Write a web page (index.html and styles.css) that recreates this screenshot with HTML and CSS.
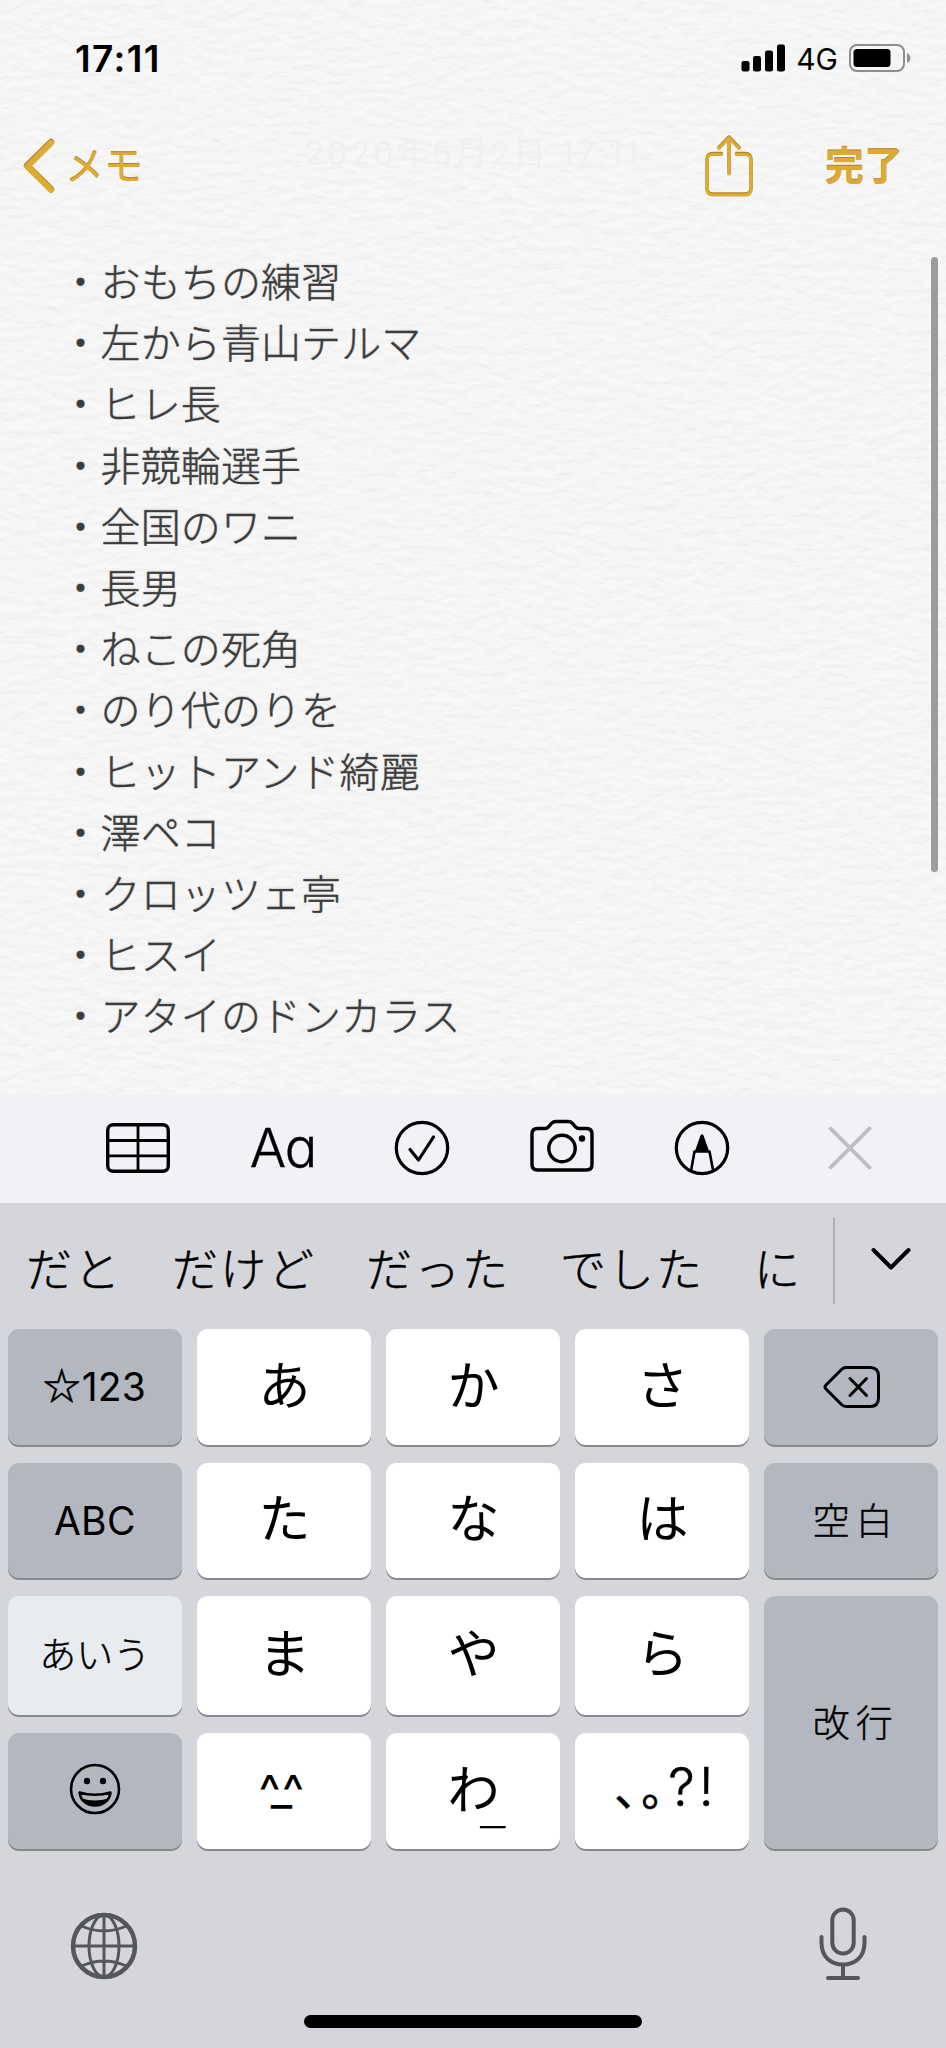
FILE: index.html
```html
<!DOCTYPE html>
<html lang="ja">
<head>
    <meta charset="UTF-8">
    <meta name="viewport" content="width=device-width, initial-scale=1.0">
    <title>メモ</title>
    <link rel="stylesheet" href="styles.css">
</head>
<body>

    <div class="note">
        <!-- Paper texture -->
        <svg class="paper" width="946" height="1094">
            <filter id="grain" x="0" y="0" width="100%" height="100%" color-interpolation-filters="sRGB">
                <feTurbulence type="fractalNoise" baseFrequency="0.06 0.12" numOctaves="3" seed="4" result="noise"/>
                <feDiffuseLighting in="noise" surfaceScale="0.9" diffuseConstant="1.15" lighting-color="#f7f7f7">
                    <feDistantLight azimuth="90" elevation="60"/>
                </feDiffuseLighting>
            </filter>
            <rect width="946" height="1094" filter="url(#grain)"/>
        </svg>

        <div class="status-bar">
            <span class="time">17:11</span>
            <div class="status-right">
                <svg width="44" height="28" viewBox="0 0 44 28">
                    <rect x="0.5" y="17" width="8" height="10.5" rx="2.2"/>
                    <rect x="12" y="12" width="8" height="15.5" rx="2.2"/>
                    <rect x="24" y="6.5" width="8" height="21" rx="2.2"/>
                    <rect x="36" y="0.5" width="8" height="27" rx="2.2"/>
                </svg>
                <span class="network">4G</span>
                <svg width="62" height="28" viewBox="0 0 62 28">
                    <rect x="1" y="1" width="54" height="26" rx="7" fill="none" stroke="#8e8e90" stroke-width="2"/>
                    <rect x="4.5" y="5" width="37" height="18" rx="3.5"/>
                    <path d="M58 9 C62.500 11 62.500 17 58 19 Z" fill="#8e8e90"/>
                </svg>
            </div>
        </div>

        <div class="nav-bar">
            <div class="back">
                <svg width="34" height="56" viewBox="0 0 34 56">
                    <path d="M28 4 L4 27.500 L28 51" class="gold-dark" stroke-width="6.500"/>
                    <path d="M28 5 L4.500 28.500 L28 52" class="gold-line" stroke-width="6"/>
                </svg>
                <span>メモ</span>
            </div>
            <div class="date">2020年5月2日 17:11</div>
            <svg class="share" width="50" height="62" viewBox="0 0 50 62">
                <g class="gold-dark" stroke-width="3.500">
                    <path d="M17.500 18.500 H9 Q3 18.500 3 24.500 V53 Q3 59 9 59 H41 Q47 59 47 53 V24.500 Q47 18.500 41 18.500 H32.500"/>
                    <path d="M25 38 V2 M15 12.500 L25 2 L35 12.500"/>
                </g>
                <g class="gold-line" stroke-width="3.200">
                    <path d="M17.500 19.500 H9 Q3 19.500 3 25.500 V54 Q3 60 9 60 H41 Q47 60 47 54 V25.500 Q47 19.500 41 19.500 H32.500"/>
                    <path d="M25 39 V3 M15 13.500 L25 3 L35 13.500"/>
                </g>
            </svg>
            <span class="done">完了</span>
        </div>

        <div class="memo">
            <p>・おもちの練習</p>
            <p>・左から青山テルマ</p>
            <p>・ヒレ長</p>
            <p>・非競輪選手</p>
            <p>・全国のワニ</p>
            <p>・長男</p>
            <p>・ねこの死角</p>
            <p>・のり代のりを</p>
            <p>・ヒットアンド綺麗</p>
            <p>・澤ペコ</p>
            <p>・クロッツェ亭</p>
            <p>・ヒスイ</p>
            <p>・アタイのドンカラス</p>
        </div>
        <div class="scrollbar"></div>
    </div>

    <div class="toolbar">
        <svg class="icon" width="64" height="50" viewBox="0 0 64 50">
            <rect x="1.700" y="1.700" width="60.600" height="46.600" rx="5.500" stroke-width="3.400"/>
            <path d="M2 17.500 H62 M2 32.800 H62 M32 2 V48" stroke-width="2.800"/>
        </svg>
        <span class="format">Aa</span>
        <svg class="icon" width="56" height="56" viewBox="0 0 56 56">
            <circle cx="28" cy="28" r="25.700" stroke-width="3.200"/>
            <path d="M16 29.500 L24.500 40 L39.500 17" stroke-width="3.200"/>
        </svg>
        <svg class="icon camera" width="66" height="54" viewBox="0 0 66 54">
            <path d="M8.500 9.500 H16 Q18 9.500 19.500 7.800 L22.500 4.400 Q24.300 2.500 27 2.500 H39 Q41.700 2.500 43.500 4.400 L46.500 7.800 Q48 9.500 50 9.500 H57.500 Q63 9.500 63 15 V45.500 Q63 51 57.500 51 H8.500 Q3 51 3 45.500 V15 Q3 9.500 8.500 9.500 Z" stroke-width="3.400"/>
            <circle cx="33" cy="29.500" r="13.200" stroke-width="3.400"/>
            <circle cx="53" cy="19.500" r="3.200" fill="#000" stroke="none"/>
        </svg>
        <svg class="icon" width="56" height="56" viewBox="0 0 56 56">
            <circle cx="28" cy="28" r="25.700" stroke-width="3.200"/>
            <path d="M17.200 50 L20.500 31.500 H35.500 L39 50" stroke-width="2.600"/>
            <path d="M21.500 31 L27 15.500 Q28 13.500 29 15.500 L34.500 31 Z" fill="#000" stroke-width="1"/>
        </svg>
        <svg class="icon close" width="44" height="44" viewBox="0 0 44 44">
            <path d="M2.500 2.500 L41.500 41.500 M41.500 2.500 L2.500 41.500" stroke-width="3.800"/>
        </svg>
    </div>

    <div class="keyboard">
        <div class="candidates">
            <span>だと</span>
            <span>だけど</span>
            <span>だった</span>
            <span>でした</span>
            <span>に</span>
            <div class="expand">
                <svg class="icon" width="40" height="24" viewBox="0 0 40 24">
                    <path d="M2.500 3 L20 20.500 L37.500 3" stroke-width="4"/>
                </svg>
            </div>
        </div>

        <div class="keys">
            <div class="key dark latin"><span class="star">☆</span>123</div>
            <div class="key">あ</div>
            <div class="key">か</div>
            <div class="key">さ</div>
            <div class="key dark backspace">
                <svg class="icon" width="58" height="44" viewBox="0 0 58 44">
                    <path d="M23 2.500 H47 Q55.500 2.500 55.500 11 V33 Q55.500 41.500 47 41.500 H23 Q20.500 41.500 18.500 39.500 L3 24 Q1 22 3 20 L18.500 4.500 Q20.500 2.500 23 2.500 Z" stroke-width="3"/>
                    <path d="M27 13.500 L43.500 30.500 M43.500 13.500 L27 30.500" stroke-width="3"/>
                </svg>
            </div>

            <div class="key dark latin">ABC</div>
            <div class="key">た</div>
            <div class="key">な</div>
            <div class="key">は</div>
            <div class="key dark label">空白</div>

            <div class="key active">あいう</div>
            <div class="key">ま</div>
            <div class="key">や</div>
            <div class="key">ら</div>
            <div class="key dark label enter">改行</div>

            <div class="key dark emoji">
                <svg class="icon" width="52" height="52" viewBox="0 0 52 52">
                    <circle cx="26" cy="26" r="24" stroke-width="2.600"/>
                    <circle cx="18" cy="18" r="3.200" fill="#000" stroke="none"/>
                    <circle cx="34" cy="18" r="3.200" fill="#000" stroke="none"/>
                    <path d="M10.500 29.500 Q26 34 41.500 29.500 C39.500 47 12.500 47 10.500 29.500 Z" stroke-width="2.400"/>
                    <path d="M12.500 35.500 Q26 39.500 39.500 35.500 C35 45.500 17 45.500 12.500 35.500 Z" fill="#000" stroke="none"/>
                </svg>
            </div>
            <div class="key face"><span>^</span><span class="mouth">_</span><span>^</span></div>
            <div class="key">わ<span class="underscore">_</span></div>
            <div class="key punct"><span class="comma">、</span><span class="period">。</span><span class="marks">?!</span></div>
        </div>

        <div class="bottom-row">
            <svg class="grey" width="68" height="68" viewBox="0 0 68 68">
                <circle cx="34" cy="34" r="31" stroke-width="4.500"/>
                <ellipse cx="34" cy="34" rx="15" ry="31" stroke-width="3"/>
                <path d="M34 3 V65 M3 34 H65 M11.500 14 Q34 24 56.500 14 M11.500 54 Q34 44 56.500 54" stroke-width="3"/>
            </svg>
            <svg class="grey" width="50" height="74" viewBox="0 0 50 74">
                <rect x="14.300" y="2.500" width="21.400" height="44" rx="10.700" stroke-width="4"/>
                <path d="M3.500 30 V36 C3.500 50 13 57.500 25 57.500 C37 57.500 46.500 50 46.500 36 V30 M25 58 V71 M10 71 H40" stroke-width="4"/>
            </svg>
        </div>
        <div class="home-indicator"></div>
    </div>

</body>
</html>
```
FILE: styles.css
```css
* {
    margin: 0;
    padding: 0;
    box-sizing: border-box;
}

body {
    width: 946px;
    height: 2048px;
    overflow: hidden;
    font-family: "Noto Sans CJK JP", sans-serif;
    background-color: #d5d6dc;
    color: #000;
}

svg {
    display: block;
    flex: none;
}

/* Note area */
.note {
    position: relative;
    height: 1094px;
    background-color: #f6f6f6;
}

.paper {
    position: absolute;
    top: 0;
    left: 0;
    opacity: 0.18; /* keep the grain subtle */
}

.status-bar,
.nav-bar,
.memo {
    position: relative;
}

.status-bar {
    display: flex;
    justify-content: space-between;
    align-items: center;
    height: 116px;
    padding: 0 35px 0 75px;
    font-family: Inter, sans-serif;
}

.time {
    font-size: 37px;
    font-weight: 600;
    letter-spacing: 1.4px;
}

.status-right {
    display: flex;
    align-items: center;
}

.network {
    margin: 2px 11px 0 11px;
    font-size: 30px;
}

.nav-bar {
    display: flex;
    align-items: center;
    height: 100px;
    padding: 0 43px 0 23px;
    color: #dbab35;
    text-shadow: 0 -1px 0 #b98025;
}

.back {
    display: flex;
    align-items: center;
    width: 281px;
    font-size: 39px;
}

.back span {
    margin: -7px 0 0 8px;
    line-height: 50px;
}

.date {
    width: 400px;
    font-family: Inter, "Noto Sans CJK JP", sans-serif;
    font-size: 33px;
    line-height: 40px;
    letter-spacing: 2.6px;
    margin-top: -26px;
    color: #f0f0f0;
    text-shadow: none;
    white-space: nowrap;
}

.done {
    margin: -7px 0 0 auto;
    font-size: 39px;
    font-weight: 700;
}

.gold-line,
.gold-dark {
    fill: none;
    stroke: #dbab35;
    stroke-linecap: round;
    stroke-linejoin: round;
}

.gold-dark {
    stroke: #b98025;
}

.memo {
    padding: 34px 0 0 60.5px;
    font-size: 40px;
    font-weight: 300;
    line-height: 61.2px;
    letter-spacing: 0.1px;
    color: #3c3c3c;
    -webkit-text-stroke: 0.4px #3c3c3c;
    text-shadow: 0 -1px 2px rgba(0, 0, 0, 0.15);
}

.scrollbar {
    position: absolute;
    top: 257px;
    right: 8px;
    width: 7px;
    height: 615px;
    border-radius: 4px;
    background-color: #9c9c9b;
}

/* Toolbar above the keyboard */
.toolbar {
    display: grid;
    grid-template-columns: 144px 146px 131px 149px 131px 166px;
    justify-items: center;
    align-items: center;
    height: 109px;
    padding: 0 0 2px 66px;
    background-color: #f1f1f6;
}

.icon {
    fill: none;
    stroke: #000;
    stroke-linecap: round;
    stroke-linejoin: round;
}

.close {
    stroke: #bcbcc1;
}

.camera {
    margin-top: -4px;
}

.format {
    font-family: Inter, sans-serif;
    font-size: 54px;
    font-weight: 300;
    font-feature-settings: "cv11";
    letter-spacing: -1px;
    -webkit-text-stroke: 0.4px #000;
}

/* Keyboard */
.keyboard {
    height: 845px;
    padding: 0 8px;
}

.candidates {
    display: flex;
    align-items: center;
    height: 126px;
    padding-left: 18px;
    font-size: 46px;
    font-weight: 300;
    line-height: 60px;
    letter-spacing: 2px;
    white-space: nowrap;
    -webkit-text-stroke: 0.5px #000;
}

.candidates span {
    flex: none;
    margin-right: 50px;
}

.expand {
    display: flex;
    flex: none;
    justify-content: center;
    align-items: center;
    width: 113px;
    height: 86px;
    margin: -10px 0 0 -19px;
    padding-bottom: 4px;
    border-left: 2px solid #adaeb3;
}

.keys {
    display: grid;
    grid-template-columns: repeat(5, 1fr);
    grid-template-rows: 116px 115px 119px 116px;
    gap: 18px 15.5px;
}

.key {
    position: relative;
    display: flex;
    justify-content: center;
    align-items: center;
    padding: 0 0 9px 1px;
    border-radius: 11px;
    background-color: #fff;
    box-shadow: 0 2px 0 #88898d;
    font-size: 52px;
    line-height: 60px;
}

.dark {
    padding: 0;
    background-color: #b3b7c0;
}

.active {
    padding: 0 0 5px;
    background-color: #e8ebf0;
    font-size: 37px;
    font-weight: 300;
    -webkit-text-stroke: 0.4px #000;
}

.latin {
    font-family: Inter, sans-serif;
    font-size: 39px;
    letter-spacing: 0.3px;
}

.star {
    margin: -6px 1px 0 0;
    font-family: "Noto Sans CJK JP", sans-serif;
    font-size: 37px;
    -webkit-text-stroke: 0.7px #000;
}

.label {
    padding: 0 0 4px 9px;
    font-size: 37px;
    font-weight: 300;
    letter-spacing: 6px;
    -webkit-text-stroke: 0.4px #000;
}

.enter {
    grid-row: span 2;
}

.backspace {
    padding-left: 1px;
}

.emoji {
    padding-bottom: 4px;
}

.face {
    padding: 0 5px 0 0;
    font-family: Inter, sans-serif;
    font-size: 47px;
}

.mouth {
    margin: -6px -10px 0;
}

.underscore {
    position: absolute;
    left: 93px;
    bottom: 18px;
    font-size: 49px;
    font-weight: 300;
}

.punct {
    justify-content: flex-start;
    padding-left: 39px;
}

.comma,
.period {
    flex: none;
    width: 27px;
    font-size: 45px;
    -webkit-text-stroke: 0.6px #000;
}

.marks {
    font-family: Inter, sans-serif;
    font-size: 53px;
    font-weight: 300;
    letter-spacing: 4px;
    -webkit-text-stroke: 0.5px #000;
}

.bottom-row {
    display: flex;
    justify-content: space-between;
    align-items: center;
    height: 74px;
    margin-top: 58px;
    padding: 0 70px 0 62px;
}

.bottom-row svg:first-child {
    margin-top: 3px;
}

.grey {
    fill: none;
    stroke: #54565c;
    stroke-linecap: round;
}

.home-indicator {
    width: 338px;
    height: 13px;
    margin: 34px auto 0;
    border-radius: 7px;
    background-color: #000;
}
```
